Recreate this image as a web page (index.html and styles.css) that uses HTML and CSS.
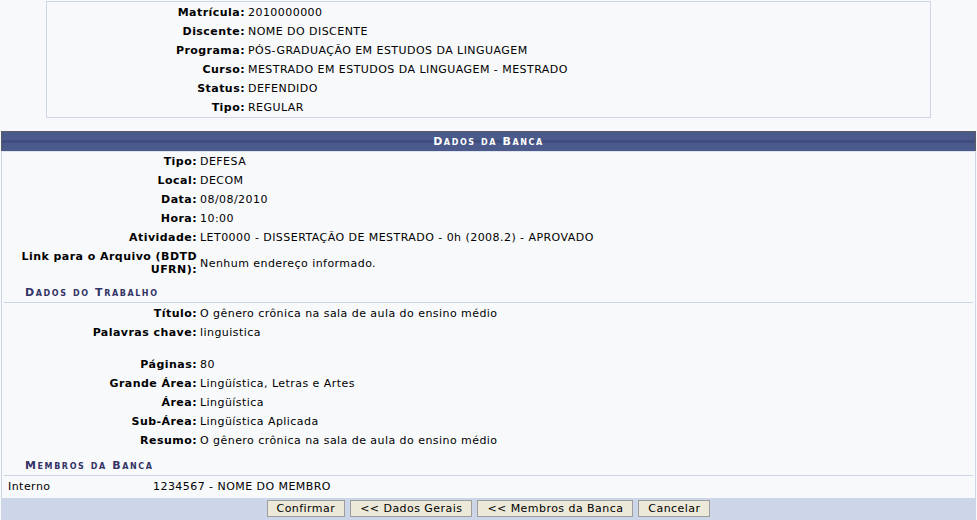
FILE: index.html
```html
<!DOCTYPE html>
<html lang="pt-BR">
<head>
    <meta charset="UTF-8">
    <title>Dados da Banca</title>
    <link rel="stylesheet" href="styles.css">
</head>
<body>
    <div class="resumo">
        <div class="campos">
            <div class="rotulo">Matrícula:</div><div class="valor">2010000000</div>
            <div class="rotulo">Discente:</div><div class="valor">NOME DO DISCENTE</div>
            <div class="rotulo">Programa:</div><div class="valor">PÓS-GRADUAÇÃO EM ESTUDOS DA LINGUAGEM</div>
            <div class="rotulo">Curso:</div><div class="valor">MESTRADO EM ESTUDOS DA LINGUAGEM - MESTRADO</div>
            <div class="rotulo">Status:</div><div class="valor">DEFENDIDO</div>
            <div class="rotulo">Tipo:</div><div class="valor">REGULAR</div>
        </div>
    </div>

    <div class="formulario">
        <div class="caption">Dados da Banca</div>

        <div class="corpo">
            <div class="dados">
                <div class="rotulo">Tipo:</div><div class="valor">DEFESA</div>
                <div class="rotulo">Local:</div><div class="valor">DECOM</div>
                <div class="rotulo">Data:</div><div class="valor">08/08/2010</div>
                <div class="rotulo">Hora:</div><div class="valor">10:00</div>
                <div class="rotulo">Atividade:</div><div class="valor">LET0000 - DISSERTAÇÃO DE MESTRADO - 0h (2008.2) - APROVADO</div>
                <div class="rotulo">Link para o Arquivo (BDTD<br>UFRN):</div><div class="valor centro">Nenhum endereço informado.</div>
            </div>

            <div class="subFormulario">Dados do Trabalho</div>

            <div class="dados">
                <div class="rotulo">Título:</div><div class="valor">O gênero crônica na sala de aula do ensino médio</div>
                <div class="rotulo">Palavras chave:</div><div class="valor">linguistica</div>
                <div class="espaco"></div>
                <div class="rotulo">Páginas:</div><div class="valor">80</div>
                <div class="rotulo">Grande Área:</div><div class="valor">Lingüística, Letras e Artes</div>
                <div class="rotulo">Área:</div><div class="valor">Lingüística</div>
                <div class="rotulo">Sub-Área:</div><div class="valor">Lingüística Aplicada</div>
                <div class="rotulo">Resumo:</div><div class="valor">O gênero crônica na sala de aula do ensino médio</div>
            </div>

            <div class="subFormulario membros">Membros da Banca</div>

            <div class="membro">
                <div class="membro-tipo">Interno</div>
                <div>1234567 - NOME DO MEMBRO</div>
            </div>
        </div>

        <div class="rodape">
            <button>Confirmar</button>
            <button>&lt;&lt; Dados Gerais</button>
            <button>&lt;&lt; Membros da Banca</button>
            <button>Cancelar</button>
        </div>
    </div>
</body>
</html>
```

FILE: styles.css
```css
:root {
    --fundo: #f8f9fb;
    --borda: #cdd5e8;
    --azul: #4a5a8b;
    --azul-escuro: #3f4e7f;
    --titulo: #333366;
}

* {
    margin: 0;
    padding: 0;
    box-sizing: border-box;
}

body {
    background-color: var(--fundo);
    font-family: 'DejaVu Sans', Verdana, sans-serif;
    font-size: 11px;
    line-height: 13px;
    letter-spacing: 0.45px;
    color: #000;
    padding: 1px 1px 0;
}

/* resumo do discente */
.resumo {
    width: 885px;
    margin: 0 auto;
    border: 1px solid var(--borda);
    padding: 1px 0 0;
}

.campos {
    display: grid;
    grid-template-columns: 198px 1fr;
    column-gap: 3px;
}

.campos .rotulo,
.campos .valor {
    padding: 3px 0;
}

.rotulo {
    font-weight: bold;
    text-align: right;
    padding-right: 2px;
}

/* formulario */
.formulario {
    margin-top: 13px;
}

.caption {
    height: 20px;
    border: 1px solid #5b5b63;
    border-bottom: none;
    background: linear-gradient(to bottom, var(--azul) 0, var(--azul) 8px, var(--azul-escuro) 8px, var(--azul-escuro) 11px, var(--azul) 11px);
    color: #fff;
    font-weight: bold;
    font-variant: small-caps;
    letter-spacing: 1.6px;
    text-align: center;
    line-height: 19px;
}

.corpo {
    border-left: 1px solid var(--borda);
    border-right: 1px solid var(--borda);
    border-top: 1px solid #dfe4f0;
    padding-bottom: 2px;
}

.dados {
    display: grid;
    grid-template-columns: 195px 1fr;
    column-gap: 3px;
}

.dados .rotulo,
.dados .valor {
    padding: 3px 0;
}

.dados .centro {
    align-self: center;
}

.espaco {
    grid-column: 1 / 3;
    height: 13px;
}

.subFormulario {
    margin: 2px 2px 1px;
    padding: 5px 0 3px 21px;
    border-bottom: 1px solid var(--borda);
    color: var(--titulo);
    font-weight: bold;
    font-variant: small-caps;
    letter-spacing: 1.6px;
}

.subFormulario.membros {
    padding-top: 7px;
}

.membro {
    display: flex;
    padding: 3px 0 3px 6px;
}

.membro-tipo {
    width: 145px;
}

.rodape {
    background-color: var(--borda);
    display: flex;
    justify-content: center;
    gap: 5px;
    padding: 2px 0 3px;
}

.rodape button {
    font-family: 'DejaVu Sans', Verdana, sans-serif;
    font-size: 11px;
    line-height: 13px;
    letter-spacing: 0.45px;
    padding: 1px 9px 1px;
    background-color: #ece9d8;
    border: 1px solid #9d9d9d;
    color: #000;
}
```
